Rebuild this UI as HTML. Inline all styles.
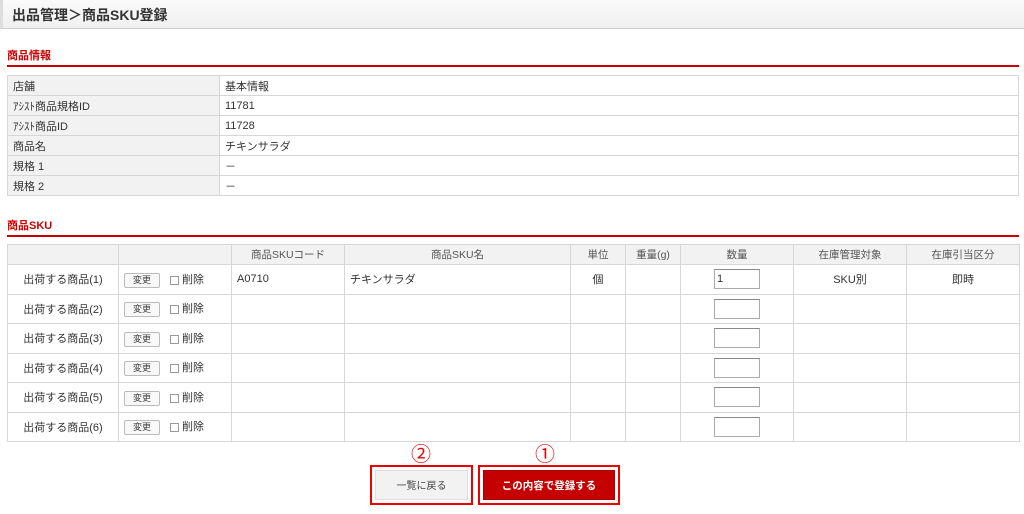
<!DOCTYPE html>
<html><head><meta charset="utf-8"><style>
*{margin:0;padding:0;box-sizing:border-box}
body{width:1024px;height:514px;background:#fff;font-family:"Liberation Sans","Noto Sans CJK JP",sans-serif;color:#333;position:relative;overflow:hidden;font-size:11px}
.hdr{position:absolute;left:0;top:0;width:1024px;height:29px;background:linear-gradient(#fafafa,#f0f0f0);border-bottom:1px solid #ccc;border-left:3px solid #ddd}
.hdr span{position:absolute;left:9px;top:5px;font-size:14px;font-weight:bold;color:#333}
.sec{position:absolute;left:7px;width:1012px;height:14px;font-size:11px;font-weight:bold;color:#c00;border-bottom:2px solid #c00;box-sizing:content-box;padding-bottom:4px}
table{position:absolute;border-collapse:collapse;table-layout:fixed}
td{border:1px solid #d6d6d6;padding:0 5px;white-space:nowrap;overflow:hidden}
.t1 td{height:20px}
.t1 td:first-child{background:#f2f2f2}
.t2 td{height:29.5px}
.t2 tr:first-child td{height:20px;background:#f2f2f2;text-align:center;font-size:10.5px;color:#555}
.c{text-align:center}
.btn{display:inline-block;border:1px solid #bbb;background:#f8f8f8;border-radius:2px;font-size:9px;width:36px;height:15px;line-height:13px;text-align:center;vertical-align:middle;color:#444}
.cb{display:inline-block;width:9px;height:9px;border:1px solid #999;vertical-align:middle;margin:0 3px 0 10px;background:#fff}
.in{display:inline-block;width:46px;height:20px;border:1px solid #aaa;border-top-color:#888;vertical-align:middle;text-align:left;padding-left:2px;line-height:18px;background:#fff}
.box{position:absolute;border:2px solid #e00}
.num{position:absolute;font-size:20px;color:#e00}
</style></head><body>
<div class="hdr"><span>出品管理＞商品SKU登録</span></div>
<div class="sec" style="top:47px">商品情報</div>
<table class="t1" style="left:7px;top:75px;width:1012px">
<col style="width:212px"><col>
<tr><td>店舗</td><td>基本情報</td></tr>
<tr><td>ｱｼｽﾄ商品規格ID</td><td>11781</td></tr>
<tr><td>ｱｼｽﾄ商品ID</td><td>11728</td></tr>
<tr><td>商品名</td><td>チキンサラダ</td></tr>
<tr><td>規格 1</td><td>－</td></tr>
<tr><td>規格 2</td><td>－</td></tr>
</table>
<div class="sec" style="top:217px">商品SKU</div>
<table class="t2" style="left:7px;top:244px;width:1012px">
<col style="width:111px"><col style="width:113px"><col style="width:113px"><col style="width:226px"><col style="width:55px"><col style="width:55px"><col style="width:113px"><col style="width:113px"><col style="width:113px">
<tr><td></td><td></td><td>商品SKUコード</td><td>商品SKU名</td><td>単位</td><td>重量(g)</td><td>数量</td><td>在庫管理対象</td><td>在庫引当区分</td></tr>
<tr><td class="c">出荷する商品(1)</td><td><span class="btn">変更</span><span class="cb"></span>削除</td><td>A0710</td><td>チキンサラダ</td><td class="c">個</td><td></td><td class="c"><span class="in">1</span></td><td class="c">SKU別</td><td class="c">即時</td></tr>
<tr><td class="c">出荷する商品(2)</td><td><span class="btn">変更</span><span class="cb"></span>削除</td><td></td><td></td><td></td><td></td><td class="c"><span class="in"></span></td><td></td><td></td></tr>
<tr><td class="c">出荷する商品(3)</td><td><span class="btn">変更</span><span class="cb"></span>削除</td><td></td><td></td><td></td><td></td><td class="c"><span class="in"></span></td><td></td><td></td></tr>
<tr><td class="c">出荷する商品(4)</td><td><span class="btn">変更</span><span class="cb"></span>削除</td><td></td><td></td><td></td><td></td><td class="c"><span class="in"></span></td><td></td><td></td></tr>
<tr><td class="c">出荷する商品(5)</td><td><span class="btn">変更</span><span class="cb"></span>削除</td><td></td><td></td><td></td><td></td><td class="c"><span class="in"></span></td><td></td><td></td></tr>
<tr><td class="c">出荷する商品(6)</td><td><span class="btn">変更</span><span class="cb"></span>削除</td><td></td><td></td><td></td><td></td><td class="c"><span class="in"></span></td><td></td><td></td></tr>
</table>
<div class="num" style="left:411px;top:438px">②</div>
<div class="num" style="left:535px;top:438px">①</div>
<div class="box" style="left:370px;top:465px;width:103px;height:40px">
<div style="position:absolute;left:3px;top:3px;right:3px;bottom:3px;background:#f2f2f2;border:1px solid #ddd;text-align:center;line-height:31px;font-size:10px;color:#444">一覧に戻る</div></div>
<div class="box" style="left:478px;top:465px;width:142px;height:40px">
<div style="position:absolute;left:3px;top:3px;right:3px;bottom:3px;background:#c50000;border:1px solid #a00;text-align:center;line-height:31px;font-size:10.5px;color:#fff;font-weight:bold">この内容で登録する</div></div>
</body></html>
